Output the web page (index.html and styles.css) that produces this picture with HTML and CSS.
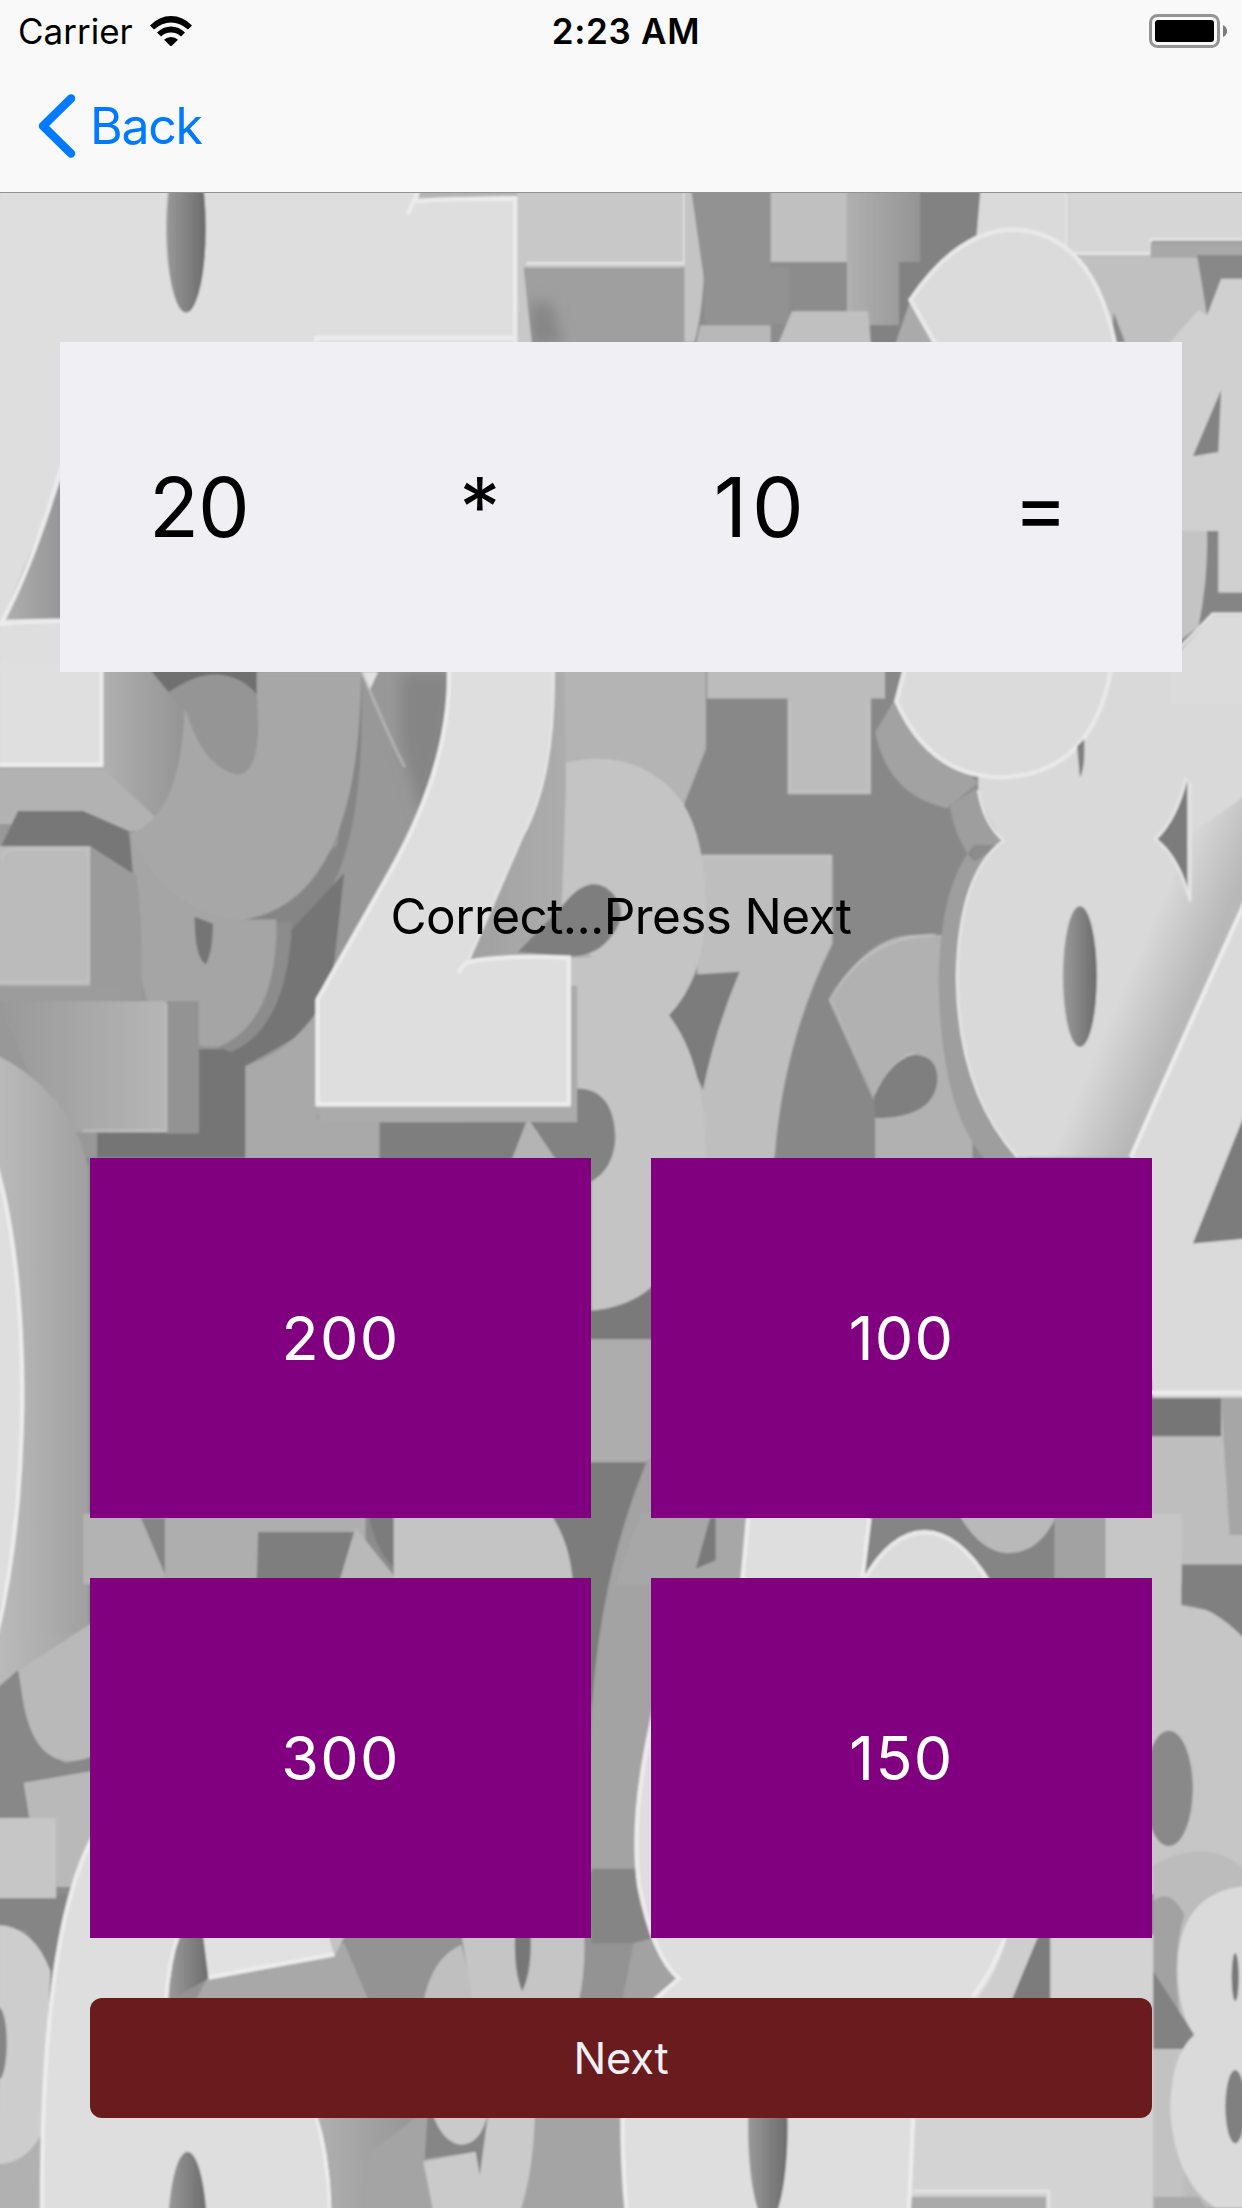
FILE: index.html
```html
<!DOCTYPE html>
<html lang="en">
<head>
<meta charset="utf-8">
<title>Multiplication quiz</title>
<link rel="stylesheet" href="styles.css">
</head>
<body>
<svg class="backdrop" viewBox="1.200 0 879.600 1568" preserveAspectRatio="none" aria-hidden="true">
  <defs>
    <linearGradient id="hole"><stop offset="0" stop-color="#999"/><stop offset="1" stop-color="#6c6c6c"/></linearGradient>
    <linearGradient id="fade"><stop offset="0" stop-color="#bababa"/><stop offset="1" stop-color="#a0a0a0"/></linearGradient>
    <linearGradient id="rise"><stop offset="0" stop-color="#989898"/><stop offset="1" stop-color="#b6b6b6"/></linearGradient>
    <linearGradient id="side"><stop offset="0" stop-color="#b0b0b0"/><stop offset="1" stop-color="#949494"/></linearGradient>
    <linearGradient id="cast"><stop offset="0" stop-color="#a0a0a0"/><stop offset="1" stop-color="#b0b0b0"/></linearGradient>
    <linearGradient id="slope" gradientUnits="userSpaceOnUse" x1="796" y1="704" x2="838" y2="722"><stop offset="0" stop-color="#b8b8b8" stop-opacity="0"/><stop offset="1" stop-color="#b8b8b8"/></linearGradient>
    <filter id="soft" x="0" y="0" width="1" height="1"><feGaussianBlur stdDeviation="0.8"/></filter>
    <filter id="haze" x="-1" y="-1" width="3" height="3"><feGaussianBlur stdDeviation="5"/></filter>
  </defs>
  <g filter="url(#soft)">
    <path fill="#8c8c8c" d="M-9-9H900V1580H-9z"/>

    <!-- top band -->
    <path fill="#dedede" d="M0 130H368V245H0z"/>
    <ellipse fill="url(#hole)" cx="133" cy="162" rx="14" ry="60"/>
    <path fill="#b5b5b5" d="M298 130H368V139L298 141z"/>
    <path class="edge" d="M297 137L290 152M296 143Q310 141 366 141V243M225 243V240H366"/>
    <path fill="#9f9f9f" d="M368 130H487V245H368z"/>
    <path fill="#868686" d="M376 215H392L400 245H376z" filter="url(#haze)"/>
    <path fill="#c8c8c8" d="M368 130H487V190H372L378 245H368z"/>
    <path class="rim" d="M374 187H486V137"/>
    <path fill="#c4c4c4" d="M488 130Q500 155 500 188Q499 220 493 243H486V137z"/>
    <path fill="#929292" d="M500 190H560V230H500zM490 130H547V200H500z"/>
    <path fill="#c0c0c0" d="M547 130H601V186H547z"/>
    <path fill="url(#side)" d="M601 130H653V186H638V231H601z"/>
    <path fill="#b8b8b8" d="M497 231H547V245H494z"/>
    <path fill="#c0c0c0" d="M552 245L562 221H616L618 245z"/>
    <path fill="#828282" d="M638 186H653V130H695V200L655 245H618V231H638z"/>
    <path fill="#dadada" d="M696 130H757V200H690z"/>
    <path fill="#c0c0c0" d="M765 180H849L857 224V250H780z"/>
    <path fill="#d6d6d6" d="M758 130H890V171H817V181H758z"/>
    <path class="rim" d="M757 137V180H816V170H890"/>
    <path fill="#a8a8a8" d="M816 172H890V183H816z"/>
    <path fill="#888" d="M849 181H890V200H866L856 224zM790 222L798 243H788z"/>
    <path fill="#aaa" d="M646 213L635 245H666z"/>
    <path class="lit" d="M664 245L646 213Q680 163 719 163Q775 165 791 245"/>
    <path fill="#d0d0d0" d="M830 243L850 220L856 224L866 198H890V421H830z"/>
    <path fill="#838383" d="M866 277L846 324L864 321z"/>
    <path fill="#c4c4c4" d="M830 377H856Q858 415 850 445L830 460z"/>
    <path fill="#858585" d="M856 377H864V421H890V436H860L850 445Q857 410 856 377z"/>

    <!-- left edge beside the question -->
    <path fill="#dedede" d="M0 243H46V480H0z"/>
    <path fill="url(#side)" d="M48 332L3 440L48 439z"/>
    <path class="edge" d="M46 328Q25 400 2 443Q20 441 48 441"/>

    <!-- middle, left half -->
    <path fill="#989898" d="M74 470H330V822H0V546z"/>
    <path fill="#b2b2b2" d="M0 546H74L130 592L0 585z"/>
    <path fill="url(#side)" d="M74 470H132V592H124L74 546z"/>
    <path fill="#777" d="M14 576H60L92 590L100 625L65 601H2z"/>
    <path fill="#858585" d="M257 480Q262 630 208 662L174 655L240 600z"/>
    <path fill="#a7a7a7" d="M107 477L132 500Q130 580 93 592Q120 652 174 653Q256 640 257 477z"/>
    <path fill="#6f6f6f" d="M107 475H183V493L121 492z"/>
    <path fill="#959595" d="M120 492Q140 478 155 479Q172 480 183 493Q188 550 169 550Q145 545 133 505z"/>
    <path fill="#757575" d="M208 660L245 620L236 700L226 728L175 757V822H70V804H142V745H160Q195 730 200 655z"/>
    <path fill="#8c8c8c" d="M196 655H208Q205 730 165 747L150 742z"/>
    <path fill="#a5a5a5" d="M93 592Q120 650 174 653H197Q198 725 157 743Q110 745 101 693z"/>
    <path fill="#757575" d="M139 651L152 656Q152 675 147 685Q139 680 139 651z"/>
    <path fill="#9b9b9b" d="M65 601L98 622Q103 660 101 710H65z"/>
    <path fill="#bbb" d="M0 601H65V700H0z"/>
    <path fill="#9c9c9c" d="M0 700H87V711H0z"/>
    <path class="rim dim" d="M2 610Q5 603 10 603H64V697H0"/>
    <path fill="#939393" d="M119 711H142V805H119z"/>
    <path fill="url(#rise)" d="M0 711H119V804H40z"/>
    <path class="rim dim" d="M119 713V803H60"/>
    <path fill="url(#fade)" d="M0 750Q50 775 64 830V1210H0z"/>
    <path fill="#a9a9a9" d="M175 757Q205 748 226 718V795H270V825H175z"/>
    <path fill="#7e7e7e" d="M270 797H430V825H270z"/>
    <path fill="#858585" d="M285 477H325Q323 540 300 580L285 530z" filter="url(#haze)"/>
    <path fill="#e2e2e2" d="M257 477H269L263 490z"/>
    <path class="rim dim" d="M258 478Q275 520 288 545"/>
    <path fill="#dfdfdf" d="M0 470H74V545H0z"/>
    <path class="edge" d="M73 470V543H0"/>

    <!-- middle, right half -->
    <path fill="#b4b4b4" d="M390 470H501V532L486 572L400 600z"/>
    <path fill="#888" d="M502 477H690V825H490V600L486 570L502 530z"/>
    <path fill="#bcbcbc" d="M502 470H628V496H618V564H559V496H502z"/>
    <path class="rim dim" d="M561 498V562H616V500"/>
    <path fill="#bebebe" d="M497 607H590V670Q555 740 549 825H495V690z"/>
    <path class="rim dim" d="M499 608H590V670Q555 740 549 822"/>
    <path fill="#7c7c7c" d="M494 692L525 690Q508 730 499 774L475 721z"/>
    <path fill="#c4c4c4" d="M400 542Q440 532 468 553Q501 575 501 646Q500 695 475 721Q501 755 501 822V850Q480 925 420 931V822L405 790V680Q390 650 396 560z"/>
    <path fill="url(#cast)" d="M330 682L375 580L394 477H401L402 560L399 644L420 680z"/>
    <path fill="#7e7e7e" d="M368 676L399 644Q415 622 430 630Q450 645 434 665Q424 679 405 679z"/>
    <path fill="#828282" d="M408 773Q436 772 437 808Q436 830 420 839L375 822V797H408z"/>
    <path fill="#b4b4b4" d="M375 794L363 825H396z"/>
    <path fill="#ababab" d="M225 785H405V700H410V797H228z"/>
    <path fill="#dedede" d="M319 470H394Q395 550 371 594L333 682Q350 679 405 679V786H225V710L276 620Q322 540 319 470z"/>
    <path class="edge" d="M319 472Q322 540 277 620L226 710V784H404V680Q355 678 333 683Q328 686 326 691"/>
    <path class="rim" d="M393 472Q395 550 371 594L333 682"/>
    <path fill="#b1b1b1" d="M589 710Q615 664 649 664H690V825H621V779z"/>
    <path class="rim dim" d="M664 664Q615 664 589 710L620 779Q635 750 649 748"/>
    <path fill="#7f7f7f" d="M620 779Q632 752 649 749Q666 750 665 768Q662 794 621 794z"/>
    <path fill="#9e9e9e" d="M691 600Q666 630 666 700Q668 790 700 825H730V600zM674 572L692 560L715 597L691 612Q677 595 674 572z"/>
    <path fill="#d9d9d9" d="M694 545L764 470H890V822H722Q680 770 679 695Q680 620 712 597Q698 580 694 560z"/>
    <path fill="url(#slope)" d="M848 590L890 560V660L802 822H740z"/>
    <path class="rim" d="M694 561Q698 585 712 597Q680 620 679 695Q680 775 722 822"/>
    <path fill="#a2a2a2" d="M636 495L621 520Q630 565 672 574L694 556z"/>
    <path class="lit" d="M642 475L636 498Q660 552 711 552Q775 550 788 475"/>
    <path fill="#808080" d="M764 530L769 525Q770 545 766 552z"/>
    <path fill="#7c7c7c" d="M842 555Q835 582 821 596Q834 606 842 630z"/>
    <path class="rim" d="M841 552Q834 582 819 596Q836 608 844 640V555"/>
    <ellipse fill="url(#hole)" cx="766" cy="693.500" rx="12" ry="50"/>
    <path fill="#dadada" d="M890 625Q840 730 802 822L818 995H890z"/>
    <path class="edge" d="M885 636Q840 735 802 822"/>
    <path fill="#dbdbdb" d="M830 470L860 437H890V500H830z"/>
    <path class="rim" d="M832 465L860 436H890"/>

    <!-- gaps between the answers -->
    <path fill="#dedede" d="M-5 822Q17 890 17 995Q17 1090-5 1165z"/>
    <path class="edge" d="M-2 826Q17 890 17 995Q16 1090-1 1160"/>
    <path fill="#7a7a7a" d="M415 931Q450 930 466 910V955H415z"/>
    <path fill="#adadad" d="M415 951H466V1038H415z"/>
    <path fill="#7c7c7c" d="M390 1039H466V1210H390z"/>
    <path fill="#a3a3a3" d="M460 1036Q425 1120 420 1220L415 1330H470V1036z"/>
    <path fill="#7b7b7b" d="M882 793L846 883L890 879V780z"/>
    <path class="edge" d="M815 989H890"/>
    <path fill="#bebebe" d="M810 992H890V1120H810z"/>
    <path fill="#767676" d="M810 993H866V1020H810z"/>
    <path fill="#a6a6a6" d="M866 993H890V1090H872z"/>
    <path fill="#c6c6c6" d="M810 1100H838V1140L890 1150V1345H810z"/>
    <path fill="#808080" d="M838 1111H890V1172Q862 1139 838 1139z"/>
    <path fill="#b3b3b3" d="M60 1075H118V1125H60z"/>
    <path fill="#858585" d="M101 1078H118V1118z"/>
    <path fill="#aeaeae" d="M118 1075H260V1125H118z"/>
    <path fill="#7e7e7e" d="M184 1088H252L241 1125H183z"/>
    <path fill="#b9b9b9" d="M253 1085L241 1125H285z"/>
    <path fill="#7c7c7c" d="M262 1075H280V1113Q267 1100 262 1075z"/>
    <path fill="#c4c4c4" d="M280 1075H391Q405 1095 407 1125H280z"/>
    <path fill="#a7a7a7" d="M455 1075H530V1125H437z"/>
    <path fill="#7a7a7a" d="M504 1078H508V1108L494 1114z"/>
    <path fill="#858585" d="M610 1075H750V1125H610z"/>
    <path fill="#b9b9b9" d="M680 1075H750Q738 1103 715 1103Q695 1102 680 1075z"/>
    <path fill="#dedede" d="M531 1075H617L612 1125H527z"/>
    <path class="edge" d="M531 1078L527 1122M617 1078L612 1120"/>
    <path class="lit" d="M612 1124Q632 1088 656 1088Q680 1088 702 1124"/>
    <path fill="#a2a2a2" d="M748 1075H784V1125H748z"/>
    <path fill="#c6c6c6" d="M784 1075H838V1125H784z"/>

    <!-- lower left edge -->
    <path fill="url(#fade)" d="M0 1160H70V1290H0z"/>
    <path fill="#888" d="M0 1198L14 1186Q22 1240 48 1252L70 1246V1258L18 1266L22 1291H0z"/>
    <path fill="#b9b9b9" d="M15 1186L70 1150V1246Q20 1268 15 1186zM18 1266L70 1257V1340H41V1291H22z"/>
    <path fill="#858585" d="M0 1345H52L37 1405L20 1370H0z"/>
    <path fill="#c6c6c6" d="M0 1291H41V1348H0z"/>
    <path fill="#b1b1b1" d="M0 1500H40V1575H0z"/>
    <path fill="#cdcdcd" d="M0 1367Q25 1368 37 1400L31 1515Q20 1536 0 1537z"/>
    <ellipse fill="#858585" cx="0" cy="1451" rx="6" ry="26"/>

    <!-- between answers and next button -->
    <path fill="#939393" d="M120 1370H470V1425H120z"/>
    <path fill="#a8a8a8" d="M149 1403L245 1380L262 1420H140z"/>
    <path fill="#dedede" d="M70 1297Q30 1370 30 1575H235Q233 1480 200 1440L118 1425L128 1370H70z"/>
    <path class="edge" d="M68 1303Q30 1370 31 1572M128 1374Q120 1395 119 1420M222 1490Q234 1530 235 1570"/>
    <path fill="url(#hole)" d="M129 1374H146L149 1405L122 1420Q121 1395 129 1374z"/>
    <path fill="#c3c3c3" d="M234 1374H246L238 1389z"/>
    <path fill="#e1e1e1" d="M145 1374H234L238 1389L149 1406z"/>
    <path class="edge" d="M149 1404L238 1388"/>
    <path fill="#bfbfbf" d="M301 1422Q307 1390 328 1381L338 1422z"/>
    <path fill="#c5c5c5" d="M328 1374H415Q416 1400 411 1422H336z"/>
    <path fill="#777" d="M366 1374H377Q378 1400 371 1414Q365 1400 366 1374z"/>
    <path fill="#858585" d="M420 1327H470V1380H420z"/>
    <path fill="#a2a2a2" d="M441 1425L450 1380L464 1376L482 1405L465 1422z"/>
    <path fill="#dedede" d="M464 1210Q445 1290 454 1340Q464 1390 482 1405L460 1425H700L740 1370H464z"/>
    <path class="edge" d="M464 1220Q447 1290 454 1340Q464 1390 482 1405L465 1420M713 1376Q703 1402 690 1418"/>
    <path fill="#cecece" d="M715 1374H737L719 1422H692Q708 1400 715 1374z"/>
    <path fill="#7b7b7b" d="M737 1374H745V1422H717z"/>
    <path fill="#d3d3d3" d="M745 1374H820V1575H640V1500H745z"/>

    <!-- lower right edge -->
    <path fill="#bcbcbc" d="M818 1325Q860 1300 890 1335V1568H818z"/>
    <ellipse fill="#898989" cx="829" cy="1270" rx="17" ry="41"/>
    <path fill="#a2a2a2" d="M818 1350Q830 1340 840 1360Q830 1390 838 1440L818 1450z"/>
    <path fill="#828282" d="M818 1400L847 1445L840 1455H818z"/>
    <path fill="#c2c2c2" d="M818 1455H840V1575H818z"/>
    <path fill="#dadada" d="M890 1339Q835 1340 835 1400Q836 1430 847 1445Q830 1460 830 1500Q834 1550 862 1568H890z"/>
    <ellipse fill="#777" cx="876" cy="1404" rx="2.500" ry="17"/>
    <ellipse fill="#808080" cx="876" cy="1496" rx="7" ry="26"/>

    <!-- bottom band -->
    <ellipse fill="url(#hole)" cx="134" cy="1590" rx="14" ry="62"/>
    <path fill="url(#side)" d="M225 1500H300V1575H236Q236 1530 225 1500z"/>
    <path fill="#a4a4a4" d="M262 1530L300 1500H444V1575H258z"/>
    <path fill="#868686" d="M304 1500H348L341 1545L338 1528L302 1533z"/>
    <path fill="#cacaca" d="M307 1500Q315 1523 329 1523Q342 1522 347 1500H380Q379 1545 368 1575H309L301 1535L338 1528L341 1545L347 1500z"/>
    <path fill="#dedede" d="M441 1500H648L645 1575H445z"/>
    <path class="edge" d="M442 1502Q442 1540 445 1570M648 1502L645 1570"/>
    <ellipse fill="url(#hole)" cx="545" cy="1510" rx="14" ry="68"/>
    <path fill="#aaa" d="M647 1560H742V1575H646zM818 1560H850L860 1575H818z"/>
    <path class="rim" d="M648 1556H744V1570"/>
  </g>
</svg>

<div class="screen">
  <header class="header">
    <div class="status">
      <div class="status-left">
        <span class="carrier">Carrier</span>
        <svg class="wifi" viewBox="0 0 42 30">
          <path d="M0 9.500Q9 0 21 0T42 9.500L38 13.500Q30 6.400 21 6.400T4 13.500z"/>
          <path d="M7 16.500Q13 10.500 21 10.500T35 16.500L31 20.500Q27 16.600 21 16.600T11 20.500z"/>
          <path d="M14 23.800Q17 21 21 21T28 23.800L21 30.500z"/>
        </svg>
      </div>
      <span class="time">2:23 AM</span>
      <div class="status-right">
        <svg class="battery" viewBox="0 0 78 34">
          <rect class="case" x="1.500" y="1.500" width="68" height="31" rx="7"/>
          <rect x="6" y="6" width="59" height="22" rx="3"/>
          <path class="nub" d="M74 11Q78 13 78 17T74 23z"/>
        </svg>
      </div>
    </div>
    <nav class="nav">
      <svg class="chevron" viewBox="0 0 38 64"><path d="M33 4.500L5 32L33 59.500"/></svg>
      <span class="back">Back</span>
    </nav>
  </header>
  <main class="quiz">
    <section class="question">
      <span>20</span><span>*</span><span class="wide">10</span><span>=</span>
    </section>
    <p class="result">Correct...Press Next</p>
    <section class="answers">
      <button class="answer">200</button>
      <button class="answer">100</button>
      <button class="answer">300</button>
      <button class="answer">150</button>
    </section>
    <button class="next">Next</button>
  </main>
</div>
</body>
</html>
```
FILE: styles.css
```css
* { box-sizing: border-box; }

body {
  margin: 0;
  width: 1242px;
  height: 2208px;
  overflow: hidden;
  position: relative;
  font-family: Inter, "Liberation Sans", sans-serif;
  color: #000;
}

button { border: 0; padding: 0; font: inherit; }

/* Decorative picture behind the whole screen */
.backdrop {
  position: absolute;
  inset: 0;
  width: 1242px;
  height: 2208px;
}
.edge { fill: none; stroke: #ececec; stroke-width: 3; }
.rim { fill: none; stroke: #e4e4e4; stroke-width: 2; }
.rim.dim { stroke: #c4c4c4; stroke-opacity: .6; }
.lit { fill: #dbdbdb; stroke: #e9e9e9; stroke-width: 3; }

.screen {
  position: relative;
  height: 2208px;
  display: flex;
  flex-direction: column;
}

.header {
  height: 193px;
  background: #f9f9f9;
  border-bottom: 1px solid #929292;
}

.status {
  height: 60px;
  padding: 0 15px 0 18px;
  display: grid;
  grid-template-columns: 1fr auto 1fr;
  align-items: center;
  font-size: 35px;
  line-height: 60px;
}
.status-left { display: flex; align-items: center; gap: 17px; }
.carrier { padding-top: 1px; }
.wifi { width: 42px; height: 30px; }
.time { font-weight: 600; letter-spacing: 0.7px; margin-left: 7px; padding-top: 1px; }
.status-right { display: flex; justify-content: flex-end; }
.battery { width: 78px; height: 34px; }
.case { fill: none; stroke: #949494; stroke-width: 3; }
.nub { fill: #7c7c7c; }

.nav {
  height: 132px;
  padding-left: 38px;
  display: flex;
  align-items: center;
  gap: 14px;
  color: #007aff;
}
.chevron { width: 38px; height: 64px; }
.chevron path {
  fill: none;
  stroke: #007aff;
  stroke-width: 8.500;
  stroke-linecap: round;
  stroke-linejoin: round;
}
.back { font-size: 50px; letter-spacing: -1.300px; }

.quiz {
  flex: 1;
  padding: 149px 60px 90px;
  display: flex;
  flex-direction: column;
}

.question {
  height: 330px;
  background: #efeff4;
  display: grid;
  grid-template-columns: repeat(4, 1fr);
  align-items: center;
  text-align: center;
  font-size: 82px;
  letter-spacing: -1px;
}
.question span { margin-right: 3px; }
.question .wide { letter-spacing: 5px; margin-right: 0; }

.result {
  margin: 0;
  height: 486px;
  line-height: 488px;
  text-align: center;
  font-size: 49.500px;
  letter-spacing: -0.600px;
}

.answers {
  height: 780px;
  margin: 0 30px 60px;
  display: grid;
  grid-template-columns: 1fr 1fr;
  grid-template-rows: 1fr 1fr;
  gap: 60px;
}
.answer {
  background: #800080;
  color: #fff;
  font-size: 61px;
  letter-spacing: 1.300px;
}

.next {
  height: 120px;
  margin: 0 30px;
  border-radius: 12px;
  background: #6a1b1e;
  color: #efeff4;
  font-size: 43.500px;
  letter-spacing: -0.200px;
}
```
